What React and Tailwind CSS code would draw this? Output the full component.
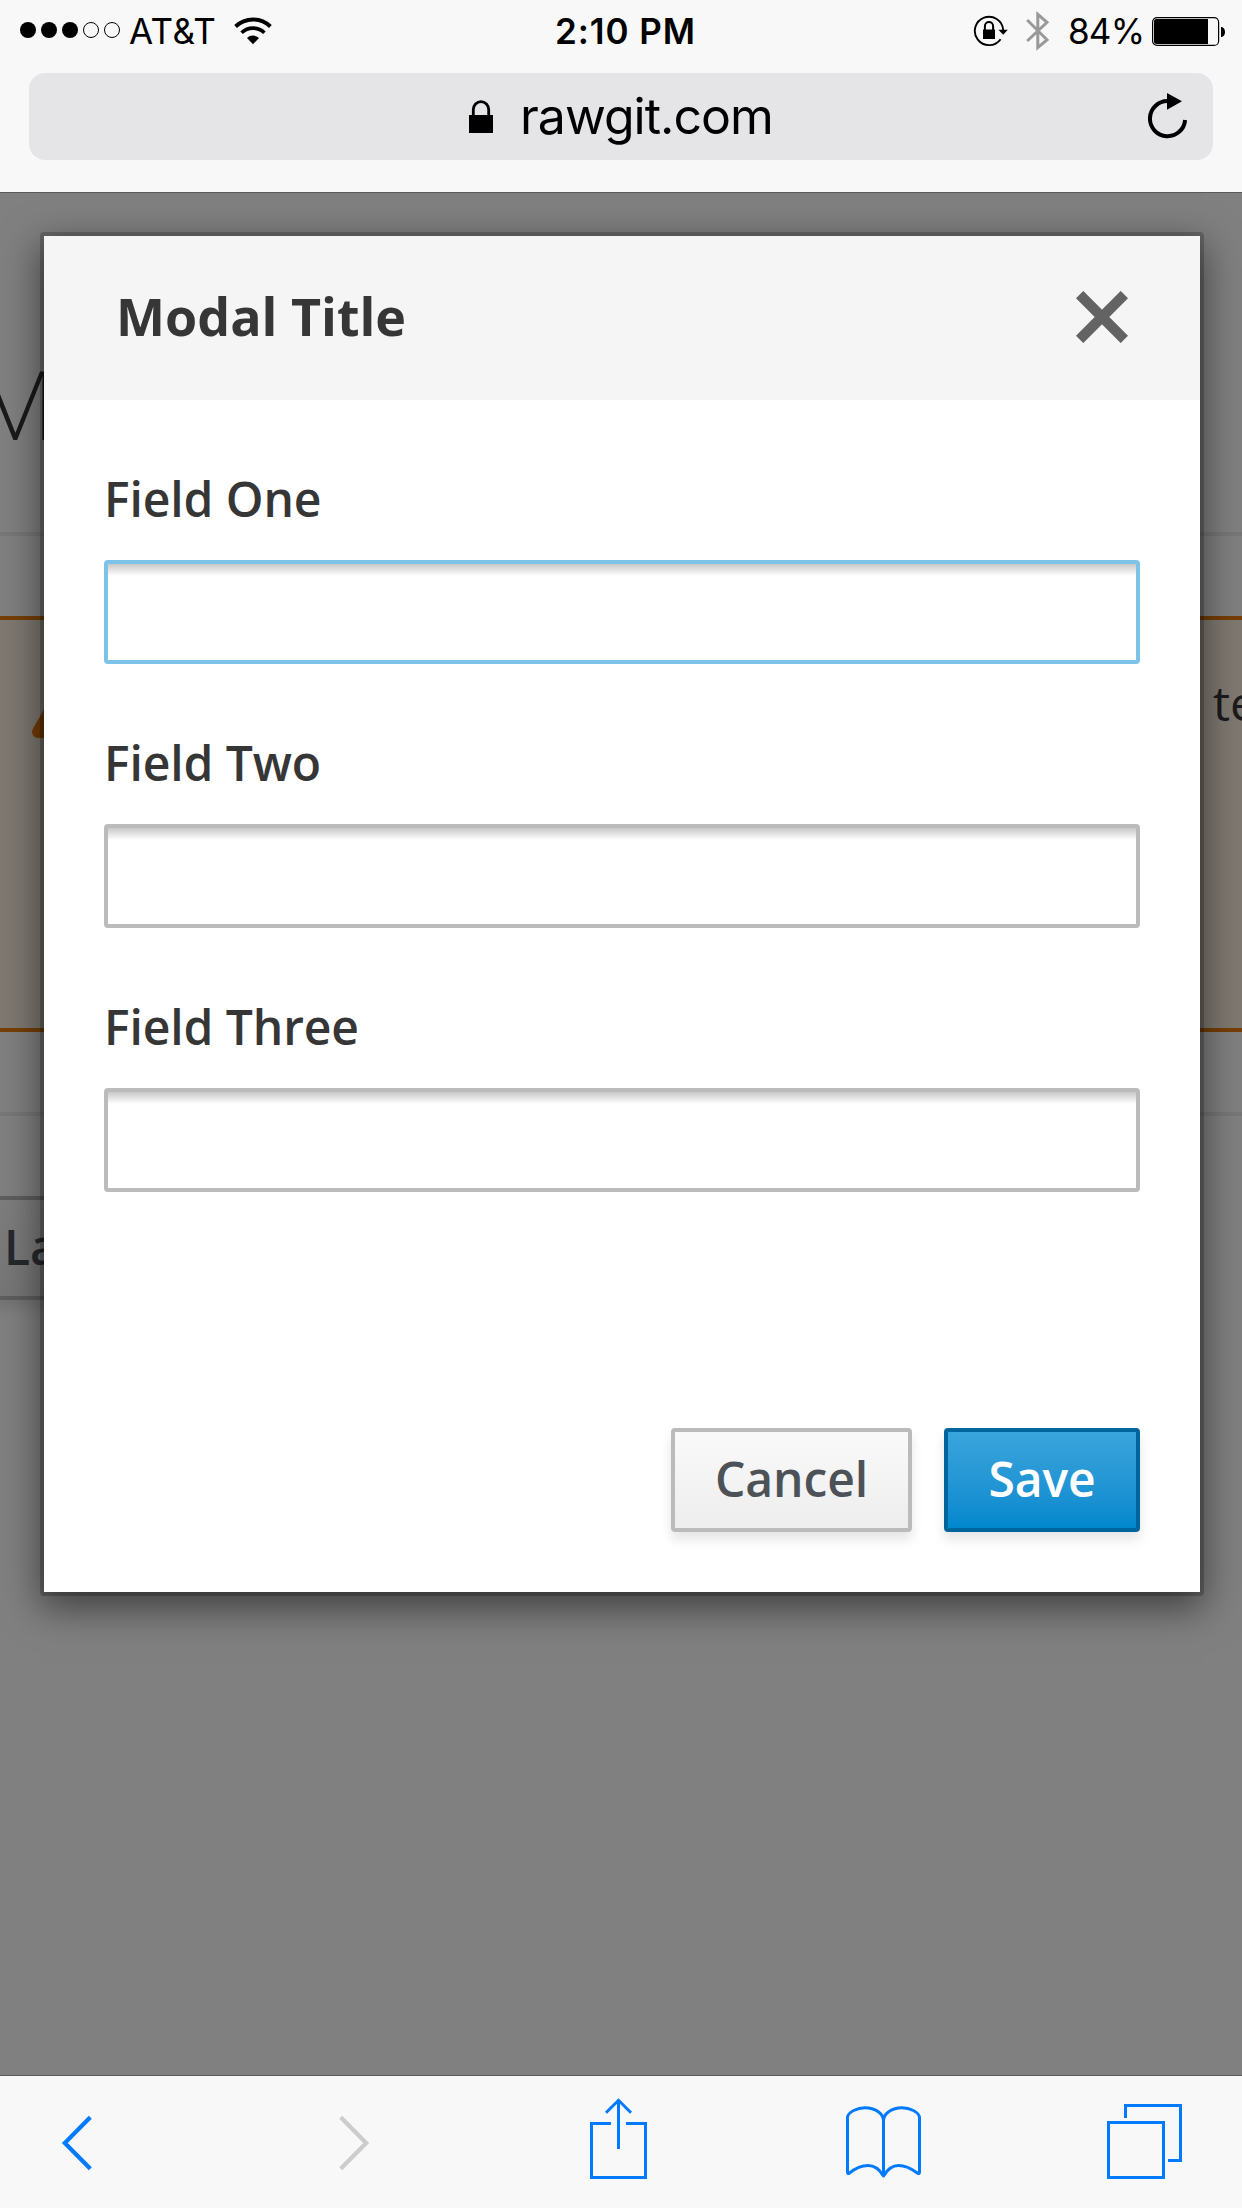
import React from "react";

const WifiIcon = () => (
  <svg className="h-[30px] w-[40px] shrink-0" viewBox="0 0 40 30" fill="none" stroke="#000">
    <path d="M2.6 10.5A25 25 0 0 1 37.4 10.5" strokeWidth="3.9" />
    <path d="M8.6 16.8A16.3 16.3 0 0 1 31.4 16.8" strokeWidth="3.7" />
    <path d="M20 28.2L14 21.9A9 9 0 0 1 26 21.9Z" fill="#000" stroke="none" />
  </svg>
);

const RotationLockIcon = () => (
  <svg className="h-[32px] w-[36px] shrink-0" viewBox="0 0 36 32" fill="none" stroke="#000">
    <path d="M27.6 24.2A14.2 14.2 0 1 1 30.2 15" strokeWidth="1.9" />
    <path d="M25.4 14.7L34.8 14.7L30.2 19.8Z" fill="#000" stroke="none" />
    <rect x="10" y="14.5" width="12" height="9.5" fill="#000" stroke="none" />
    <path d="M11.9 15V11.2A4.1 4.1 0 0 1 20.1 11.2V15" strokeWidth="2" />
  </svg>
);

const BluetoothIcon = () => (
  <svg className="h-[42px] w-[24px] shrink-0" viewBox="0 0 24 42" fill="none" stroke="#999" strokeWidth="3">
    <path d="M1.2 10L21 29.8L11.8 37.6V4.4L21 12.4L1.2 31" />
  </svg>
);

const BatteryIcon = () => (
  <svg className="h-[29px] w-[74px] shrink-0" viewBox="0 0 74 29">
    <rect x="0.6" y="0.6" width="66" height="27.8" rx="4.5" fill="none" stroke="#000" strokeWidth="1.2" />
    <rect x="2" y="2" width="54" height="25" rx="2.5" />
    <rect x="52" y="2" width="4" height="25" />
    <path d="M69 10C74.3 10 74.3 20 69 20Z" />
  </svg>
);

const LockIcon = () => (
  <svg className="h-[33px] w-[24px] shrink-0" viewBox="0 0 24 33">
    <rect x="0" y="15" width="24" height="18" />
    <path d="M4.3 16V9.6A7.7 8 0 0 1 19.7 9.6V16" fill="none" stroke="#000" strokeWidth="2.8" />
  </svg>
);

const ReloadIcon = () => (
  <svg className="h-[46px] w-[40px] shrink-0" viewBox="0 0 40 46">
    <path d="M37.1 27A17.6 17.6 0 1 1 19.6 8" fill="none" stroke="#000" strokeWidth="4" />
    <path d="M19 0L34 8.3L19 16.8Z" />
  </svg>
);

const CloseIcon = () => (
  <svg className="h-[52px] w-[52px]" viewBox="0 0 52 52" stroke="#636363" strokeWidth="10.4">
    <path d="M3.6 3.6L48.4 48.4M48.4 3.6L3.6 48.4" />
  </svg>
);

const Toolbar = () => (
  <footer className="flex h-[133px] shrink-0 items-start border-t border-[#595959] bg-[#f8f8f8] text-[#007aff]">
    <svg className="mt-[38px] ml-[61px] h-[58px] w-[32px]" viewBox="0 0 32 58" fill="none" stroke="currentColor" strokeWidth="4.2">
      <path d="M29.3 3.3L3.8 29L29.3 54.7" />
    </svg>
    <svg className="mt-[38px] ml-[246px] h-[58px] w-[32px] text-[#cccccc]" viewBox="0 0 32 58" fill="none" stroke="currentColor" strokeWidth="4.2">
      <path d="M1.7 3.3L27.2 29L1.7 54.7" />
    </svg>
    <svg className="mt-[22px] ml-[219px] h-[81px] w-[57px]" viewBox="0 0 57 81" fill="none" stroke="currentColor" strokeWidth="3">
      <path d="M21 25.5H1.5V79.5H55.5V25.5H36" />
      <path d="M28.5 51V2M16 14.8L28.5 2.3L41 14.8" />
    </svg>
    <svg className="mt-[30px] ml-[199px] h-[73px] w-[75px]" viewBox="0 0 75 73" fill="none" stroke="currentColor" strokeWidth="3" strokeLinejoin="round">
      <path d="M37.5 15V70C34 64 30 59.5 22 59.5C13 59.5 6 65 3.3 67.2C2.2 68 1.5 67.5 1.5 66.2V11C2.5 6 11 1.7 19 1.7C29 1.7 37.5 7.5 37.5 15C37.5 7.5 46 1.7 56 1.7C64 1.7 72.5 6 73.5 11V66.2C73.5 67.5 72.8 68 71.7 67.2C68 64.5 61 59.5 52.5 59.5C45 59.5 41 64 37.5 70" />
    </svg>
    <svg className="mt-[28px] ml-[186px] h-[75px] w-[75px]" viewBox="0 0 75 75" fill="none" stroke="currentColor" strokeWidth="3">
      <rect x="1.5" y="18.5" width="55" height="55" />
      <path d="M18.5 14V1.5H73.5V56.5H61" />
    </svg>
  </footer>
);

const Field = ({ label, focused }) => (
  <label className="mb-16 block">
    <span className="mb-[28px] block pt-px text-[48px] leading-[67px] font-semibold tracking-[-0.1px]">{label}</span>
    <input
      type="text"
      className={
        "block h-[104px] w-full rounded-[4px] border-4 bg-white bg-[linear-gradient(#c8c8c8,#ffffff)] bg-[length:100%_12px] bg-no-repeat px-6 outline-none " +
        (focused ? "border-[#7dc3e8]" : "border-[#bbbbbb]")
      }
    />
  </label>
);

export default function App() {
  return (
    <div className="flex h-[2208px] w-[1242px] flex-col overflow-hidden bg-[#f8f8f8] font-['Open_Sans',sans-serif] text-[#363636]">
      <header className="h-[193px] shrink-0 border-b border-[#595959] bg-[#f8f8f8] font-['Inter',sans-serif] text-black">
        <div className="flex h-[62px] items-center text-[35px] leading-[62px]">
          <div className="flex w-[555px] items-center pl-5">
            <div className="mt-[-2px] flex gap-[5px]">
              <span className="size-4 rounded-full bg-black" />
              <span className="size-4 rounded-full bg-black" />
              <span className="size-4 rounded-full bg-black" />
              <span className="size-4 rounded-full border border-black" />
              <span className="size-4 rounded-full border border-black" />
            </div>
            <span className="mr-[16px] ml-[9px] w-[88px] tracking-[0.4px] whitespace-nowrap">AT&amp;T</span>
            <WifiIcon />
          </div>
          <span className="font-semibold tracking-[0.9px] whitespace-nowrap">2:10 PM</span>
          <div className="ml-auto flex items-center pr-[16px]">
            <RotationLockIcon />
            <span className="ml-[17px] flex"><BluetoothIcon /></span>
            <span className="mr-[10px] ml-[18px] w-[74px] tracking-[-0.8px] whitespace-nowrap">84%</span>
            <BatteryIcon />
          </div>
        </div>
        <div className="mx-[29px] mt-[11px] flex h-[87px] items-center rounded-[16px] bg-[#e5e5e7]">
          <span className="ml-[440px]"><LockIcon /></span>
          <span className="ml-[27px] text-[50px] leading-[87px] tracking-[-1px] whitespace-nowrap">rawgit.com</span>
          <span className="mr-[25px] mb-[2px] ml-auto"><ReloadIcon /></span>
        </div>
      </header>

      <main className="relative h-[1882px] shrink-0 overflow-hidden bg-[#808080]">
        <h1 className="-ml-[26px] pt-[144px] pb-[64px] text-[96px] leading-[131px] font-light whitespace-nowrap text-[#1a1a1a]">
          Modal
        </h1>
        <hr className="border-t-4 border-[#777777]" />
        <div className="mt-20 flex h-[416px] items-start border-y-4 border-[#783f04] bg-[#7f7972] text-[48px] leading-[67px] text-[#1b1b1b]">
          <svg className="mt-[18px] ml-[32px] h-[100px] w-[110px]" viewBox="0 0 110 100" fill="#763d04" stroke="#763d04" strokeWidth="12" strokeLinejoin="round">
            <path d="M6 94L55 8L104 94Z" />
          </svg>
          <span className="mt-[49px] ml-auto w-[29px] whitespace-nowrap">te</span>
        </div>
        <hr className="mt-20 border-t-4 border-[#777777]" />
        <button className="mt-20 -ml-[44px] flex h-[104px] items-center border-4 border-[#5e5e5e] bg-linear-to-b from-[#7d7d7d] to-[#767676] px-[44px] pb-[3px] text-[48px] leading-[67px] font-semibold text-[#26292c] shadow-[0_8px_12px_rgba(3,3,3,0.1)]">
          Launch
        </button>

        <section className="absolute top-[39px] left-[40px] h-[1364px] w-[1164px] rounded-[4px] border-4 border-black/20">
          <div className="flex h-full flex-col bg-white shadow-[0_12px_36px_4px_rgba(0,0,0,0.5)]">
            <div className="flex h-[164px] items-center justify-between bg-[#f5f5f5] px-[72px]">
              <h2 className="mb-1 text-[52px] leading-[72px] font-bold">Modal Title</h2>
              <button className="mb-[2px]" aria-label="Close"><CloseIcon /></button>
            </div>
            <div className="px-[60px] pt-16">
              <Field label="Field One" focused />
              <Field label="Field Two" />
              <Field label="Field Three" />
            </div>
            <div className="mt-auto flex justify-end gap-8 px-[60px] pb-[60px] text-[48px] leading-[67px] font-semibold tracking-[-0.1px]">
              <button className="flex h-[104px] w-[241px] items-center justify-center rounded-[4px] border-4 border-[#bbbbbb] bg-linear-to-b from-[#fafafa] to-[#ededed] pb-[3px] text-[#4d5258] shadow-[0_8px_12px_rgba(3,3,3,0.1)]">
                Cancel
              </button>
              <button className="flex h-[104px] w-[196px] items-center justify-center rounded-[4px] border-4 border-[#00659c] bg-linear-to-b from-[#39a5dc] to-[#0088ce] pb-[3px] text-white shadow-[0_8px_12px_rgba(3,3,3,0.1)]">
                Save
              </button>
            </div>
          </div>
        </section>
      </main>
      <Toolbar />
    </div>
  );
}
